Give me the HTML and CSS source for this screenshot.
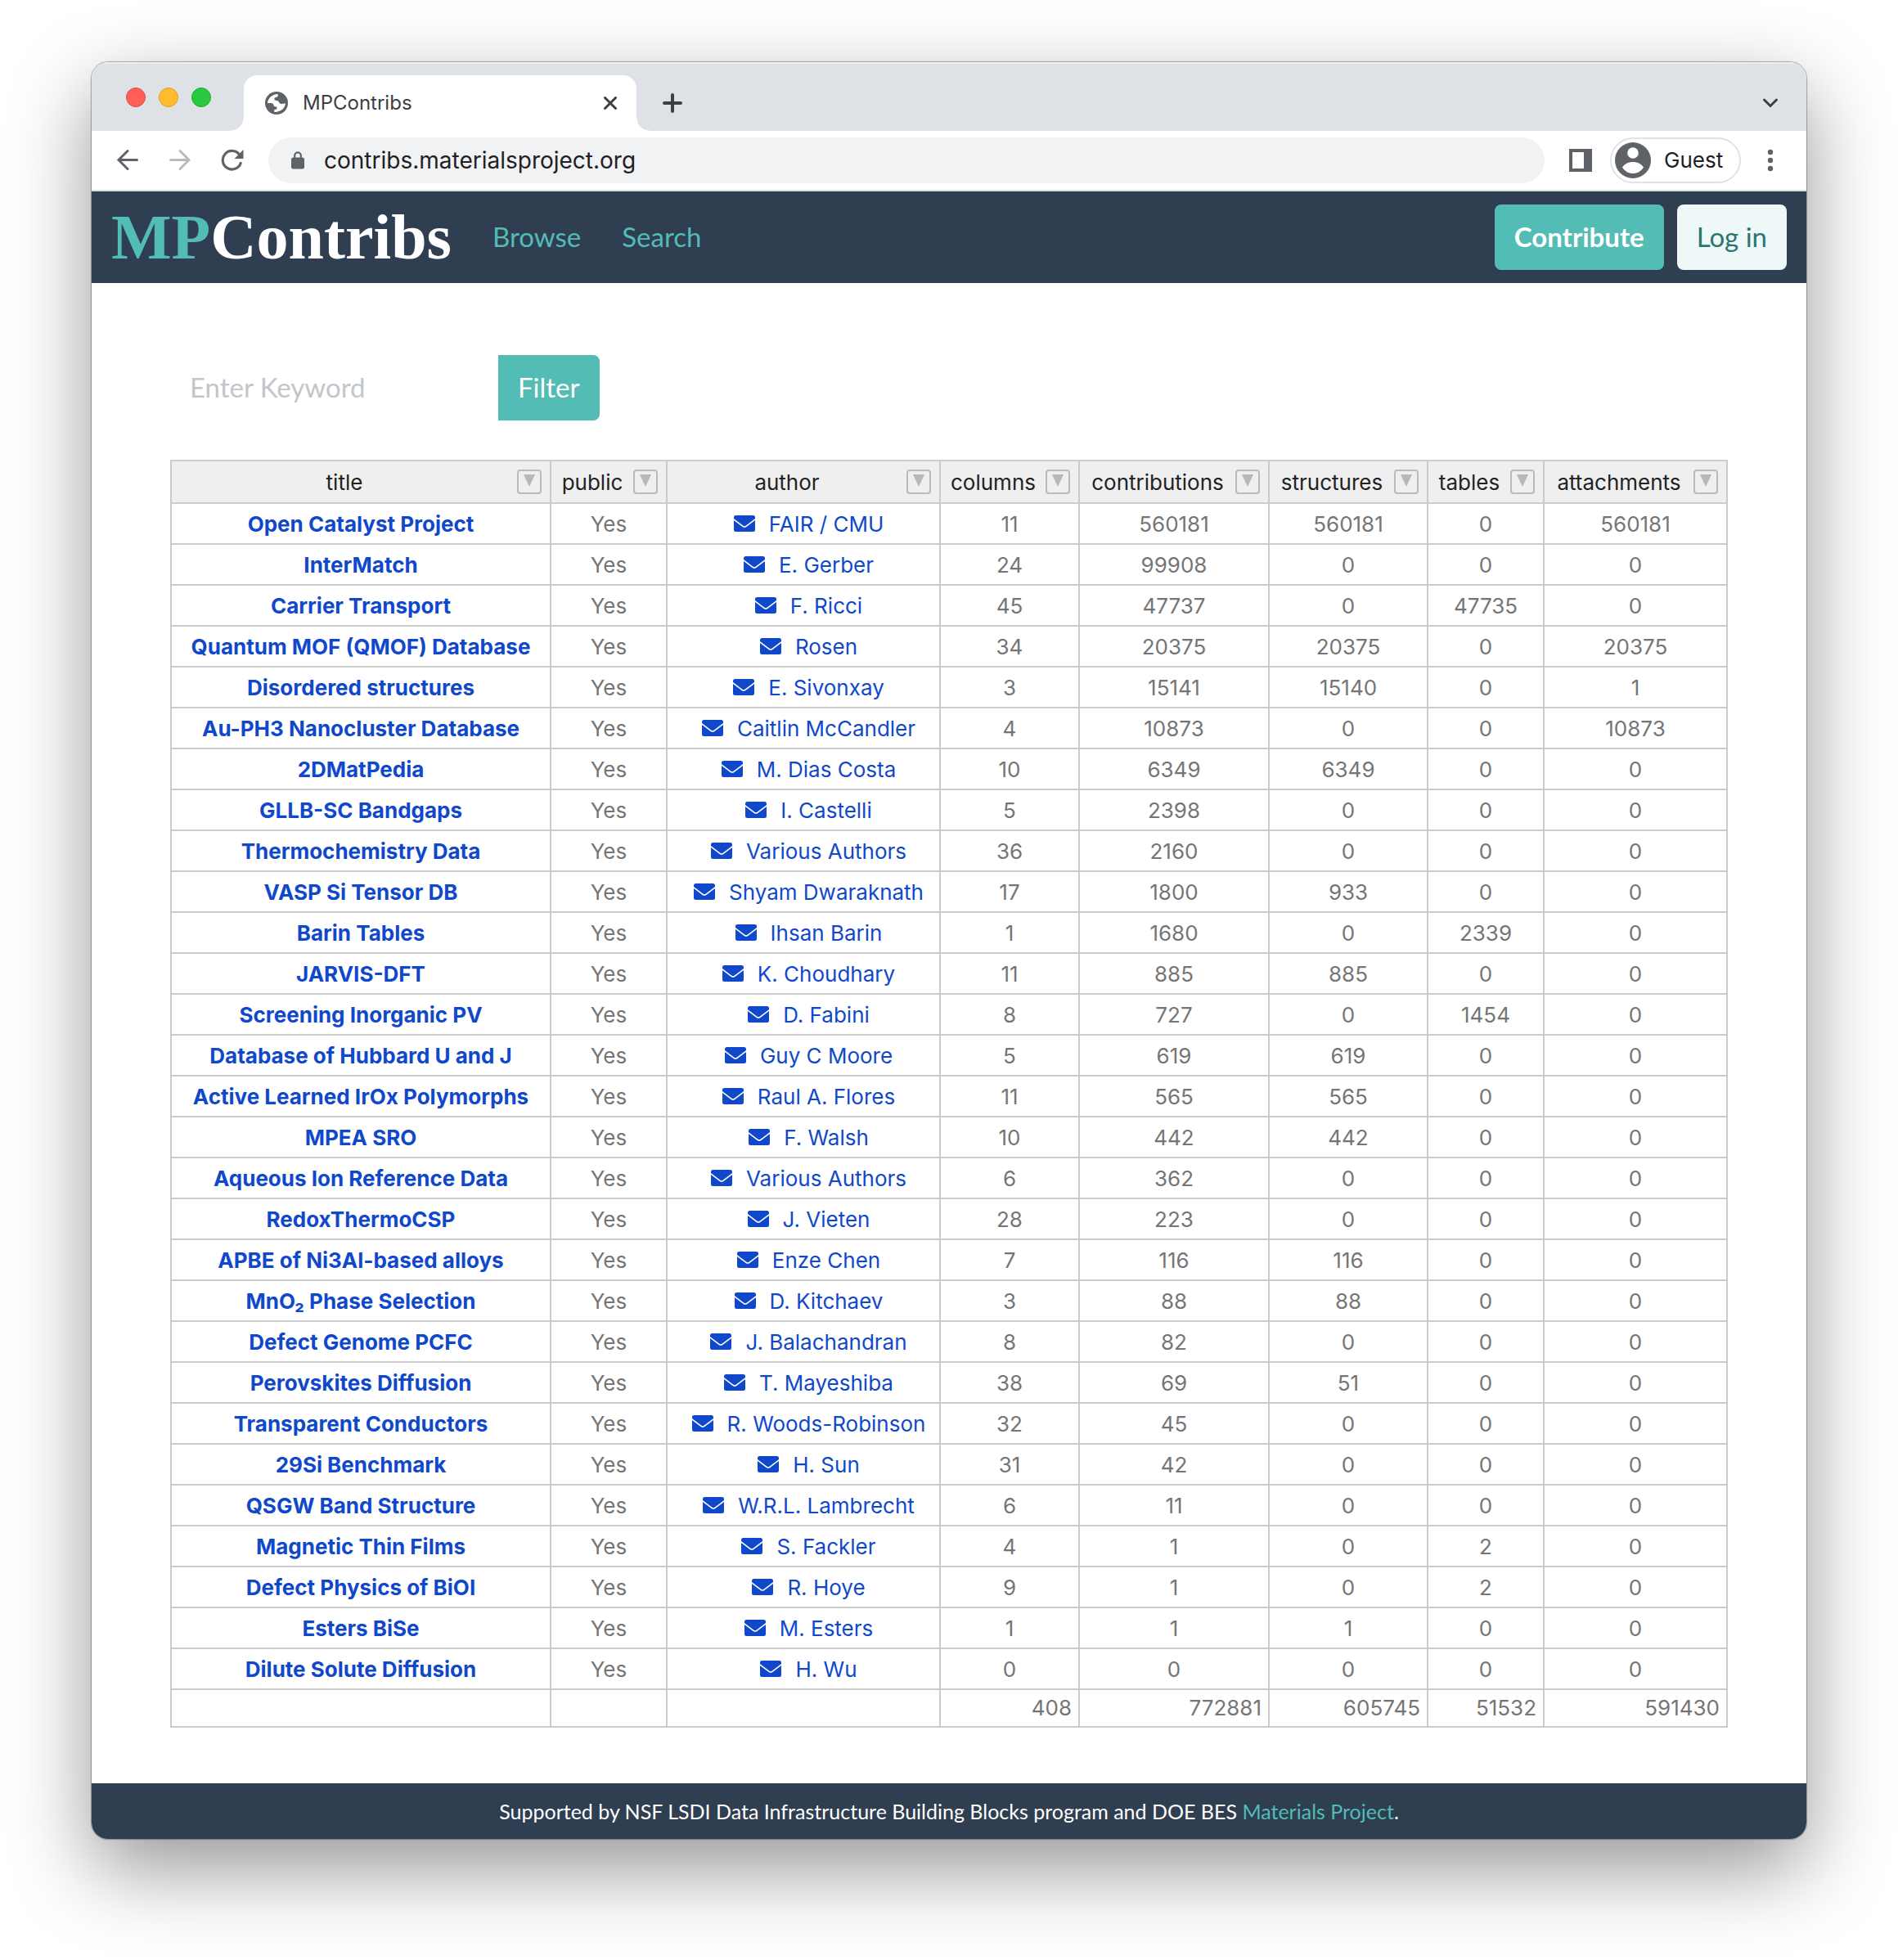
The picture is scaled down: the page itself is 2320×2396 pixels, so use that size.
FILE: index.html
```html
<!DOCTYPE html>
<html lang="en">
<head>
<meta charset="utf-8">
<meta name="viewport" content="width=device-width, initial-scale=1">
<title>MPContribs</title>
<link rel="stylesheet" href="styles.css">
</head>
<body>
<svg class="sprite" aria-hidden="true">
  <symbol id="mail" viewBox="0 0 26 20"><path d="M2.5 0h21A2.5 2.5 0 0 1 26 2.5v1.6L14.8 12.6q-1.8 1.3-3.6 0L0 4.1V2.5A2.5 2.5 0 0 1 2.5 0z"/><path d="M0 6l10.6 8q2.4 1.7 4.8 0L26 6v11.5a2.5 2.5 0 0 1-2.5 2.5h-21A2.5 2.5 0 0 1 0 17.5z"/></symbol>
  <symbol id="tri" viewBox="0 0 14 15"><path d="M0 0h14L7 15z"/></symbol>
</svg>
<div class="window">
  <div class="tabstrip">
    <div class="lights"><span class="light red"></span><span class="light yellow"></span><span class="light green"></span></div>
    <div class="tab">
      <svg class="globe" viewBox="0 0 28 28" aria-hidden="true"><circle cx="14" cy="14" r="14" fill="#5f6368"/><path fill="#fff" d="M3 13.9C3.500 8.600 8 3.400 15.700 3.100L15.900 4.600Q15.700 6.900 13.300 7Q11.300 7.200 11.300 8.900Q11.400 10.900 14 10.900Q16.800 11 17 13Q17.400 15 19.800 15Q23 15 24.900 14.200C24.600 20 19.800 25 11.300 24.900L11.300 22Q14.600 22.200 14.700 20.200Q14.800 18.300 12.300 18.200Q10.400 18.200 10.300 16.200Q10.200 14 7.800 13.900Z"/></svg>
      <span class="tab-title">MPContribs</span>
      <button class="bare" aria-label="Close tab"><svg width="16" height="16" viewBox="0 0 16 16"><path d="M1.500 1.500l13 13M14.500 1.500l-13 13" stroke="#3c4043" stroke-width="3" stroke-linecap="round"/></svg></button>
    </div>
    <button class="bare plus" aria-label="New tab"><svg width="24" height="24" viewBox="0 0 24 24"><path d="M12 2v20M2 12h20" stroke="#3c4043" stroke-width="4" stroke-linecap="round"/></svg></button>
    <button class="bare chevron" aria-label="Search tabs"><svg width="18" height="12" viewBox="0 0 18 12"><path d="M1.500 2L9 9.500 16.500 2" fill="none" stroke="#3c4043" stroke-width="3" stroke-linecap="round"/></svg></button>
  </div>
  <div class="toolbar">
    <div class="nav-icons">
      <button class="bare" aria-label="Back"><svg width="28" height="28" viewBox="0 0 28 28"><path d="M25.500 13.500H3M14 2.500l-11 11 11 11" fill="none" stroke="#5f6368" stroke-width="3" stroke-linecap="round"/></svg></button>
      <button class="bare" aria-label="Forward"><svg width="28" height="28" viewBox="0 0 28 28"><path d="M2.500 13.500H25M14 2.500l11 11-11 11" fill="none" stroke="#bababc" stroke-width="3" stroke-linecap="round"/></svg></button>
      <button class="bare" aria-label="Reload"><svg width="28" height="28" viewBox="0 0 28 28"><path d="M24.200 17.500A11.300 11.300 0 1 1 22.500 6.800" fill="none" stroke="#5f6368" stroke-width="3.200" stroke-linecap="round"/><path d="M27.500 1v11H16.500z" fill="#5f6368"/></svg></button>
    </div>
    <label class="omnibox">
      <svg width="16" height="22" viewBox="0 0 16 22" aria-hidden="true"><path d="M4.200 8V5.200a3.800 3.800 0 0 1 7.600 0V8" fill="none" stroke="#5f6368" stroke-width="2.200"/><rect y="7.500" width="16" height="14" rx="2.500" fill="#5f6368"/></svg>
      <input type="text" aria-label="Address" value="contribs.materialsproject.org">
    </label>
    <button class="bare panel" aria-label="Side panel"><svg width="28" height="28" viewBox="0 0 28 28"><path fill="#5f6368" fill-rule="evenodd" d="M0 0h28v28H0zM4 4v20h14V4z"/></svg></button>
    <button class="guest"><svg width="44" height="44" viewBox="0 0 44 44" aria-hidden="true"><circle cx="22" cy="22" r="22" fill="#5f6368"/><circle cx="22" cy="13" r="6.800" fill="#fff"/><path d="M9 30.500C12 26 17 24 22 24s10 2 13 6.500C32 35.500 27 38 22 38S12 35.500 9 30.500z" fill="#fff"/></svg>Guest</button>
    <button class="bare" aria-label="Menu"><svg width="8" height="28" viewBox="0 0 8 28"><g fill="#5f6368"><circle cx="4" cy="4" r="3.200"/><circle cx="4" cy="14" r="3.200"/><circle cx="4" cy="24" r="3.200"/></g></svg></button>
  </div>

  <header class="navbar">
    <a class="brand" href="#"><span>MP</span>Contribs</a>
    <nav class="links"><a href="#">Browse</a><a href="#">Search</a></nav>
    <div class="actions"><button class="btn primary">Contribute</button><button class="btn light-btn">Log in</button></div>
  </header>

  <main class="content">
    <form class="filter">
      <input type="text" aria-label="Keyword" placeholder="Enter Keyword">
      <button type="button" class="btn submit">Filter</button>
    </form>
    <table class="projects">
      <colgroup><col class="c-title"><col class="c-small"><col class="c-author"><col class="c-columns"><col class="c-contribs"><col class="c-structures"><col class="c-small"><col class="c-attach"></colgroup>
      <thead><tr>
        <th><div class="head"><span>title</span><button aria-label="Filter title"><svg><use href="#tri"/></svg></button></div></th>
        <th><div class="head"><span>public</span><button aria-label="Filter public"><svg><use href="#tri"/></svg></button></div></th>
        <th><div class="head"><span>author</span><button aria-label="Filter author"><svg><use href="#tri"/></svg></button></div></th>
        <th><div class="head"><span>columns</span><button aria-label="Filter columns"><svg><use href="#tri"/></svg></button></div></th>
        <th><div class="head"><span>contributions</span><button aria-label="Filter contributions"><svg><use href="#tri"/></svg></button></div></th>
        <th><div class="head"><span>structures</span><button aria-label="Filter structures"><svg><use href="#tri"/></svg></button></div></th>
        <th><div class="head"><span>tables</span><button aria-label="Filter tables"><svg><use href="#tri"/></svg></button></div></th>
        <th><div class="head"><span>attachments</span><button aria-label="Filter attachments"><svg><use href="#tri"/></svg></button></div></th>
      </tr></thead>
      <tbody>
        <tr><td><a href="#">Open Catalyst Project</a></td><td>Yes</td><td><a href="#"><svg><use href="#mail"/></svg>FAIR / CMU</a></td><td>11</td><td>560181</td><td>560181</td><td>0</td><td>560181</td></tr>
        <tr><td><a href="#">InterMatch</a></td><td>Yes</td><td><a href="#"><svg><use href="#mail"/></svg>E. Gerber</a></td><td>24</td><td>99908</td><td>0</td><td>0</td><td>0</td></tr>
        <tr><td><a href="#">Carrier Transport</a></td><td>Yes</td><td><a href="#"><svg><use href="#mail"/></svg>F. Ricci</a></td><td>45</td><td>47737</td><td>0</td><td>47735</td><td>0</td></tr>
        <tr><td><a href="#">Quantum MOF (QMOF) Database</a></td><td>Yes</td><td><a href="#"><svg><use href="#mail"/></svg>Rosen</a></td><td>34</td><td>20375</td><td>20375</td><td>0</td><td>20375</td></tr>
        <tr><td><a href="#">Disordered structures</a></td><td>Yes</td><td><a href="#"><svg><use href="#mail"/></svg>E. Sivonxay</a></td><td>3</td><td>15141</td><td>15140</td><td>0</td><td>1</td></tr>
        <tr><td><a href="#">Au-PH3 Nanocluster Database</a></td><td>Yes</td><td><a href="#"><svg><use href="#mail"/></svg>Caitlin McCandler</a></td><td>4</td><td>10873</td><td>0</td><td>0</td><td>10873</td></tr>
        <tr><td><a href="#">2DMatPedia</a></td><td>Yes</td><td><a href="#"><svg><use href="#mail"/></svg>M. Dias Costa</a></td><td>10</td><td>6349</td><td>6349</td><td>0</td><td>0</td></tr>
        <tr><td><a href="#">GLLB-SC Bandgaps</a></td><td>Yes</td><td><a href="#"><svg><use href="#mail"/></svg>I. Castelli</a></td><td>5</td><td>2398</td><td>0</td><td>0</td><td>0</td></tr>
        <tr><td><a href="#">Thermochemistry Data</a></td><td>Yes</td><td><a href="#"><svg><use href="#mail"/></svg>Various Authors</a></td><td>36</td><td>2160</td><td>0</td><td>0</td><td>0</td></tr>
        <tr><td><a href="#">VASP Si Tensor DB</a></td><td>Yes</td><td><a href="#"><svg><use href="#mail"/></svg>Shyam Dwaraknath</a></td><td>17</td><td>1800</td><td>933</td><td>0</td><td>0</td></tr>
        <tr><td><a href="#">Barin Tables</a></td><td>Yes</td><td><a href="#"><svg><use href="#mail"/></svg>Ihsan Barin</a></td><td>1</td><td>1680</td><td>0</td><td>2339</td><td>0</td></tr>
        <tr><td><a href="#">JARVIS-DFT</a></td><td>Yes</td><td><a href="#"><svg><use href="#mail"/></svg>K. Choudhary</a></td><td>11</td><td>885</td><td>885</td><td>0</td><td>0</td></tr>
        <tr><td><a href="#">Screening Inorganic PV</a></td><td>Yes</td><td><a href="#"><svg><use href="#mail"/></svg>D. Fabini</a></td><td>8</td><td>727</td><td>0</td><td>1454</td><td>0</td></tr>
        <tr><td><a href="#">Database of Hubbard U and J</a></td><td>Yes</td><td><a href="#"><svg><use href="#mail"/></svg>Guy C Moore</a></td><td>5</td><td>619</td><td>619</td><td>0</td><td>0</td></tr>
        <tr><td><a href="#">Active Learned IrOx Polymorphs</a></td><td>Yes</td><td><a href="#"><svg><use href="#mail"/></svg>Raul A. Flores</a></td><td>11</td><td>565</td><td>565</td><td>0</td><td>0</td></tr>
        <tr><td><a href="#">MPEA SRO</a></td><td>Yes</td><td><a href="#"><svg><use href="#mail"/></svg>F. Walsh</a></td><td>10</td><td>442</td><td>442</td><td>0</td><td>0</td></tr>
        <tr><td><a href="#">Aqueous Ion Reference Data</a></td><td>Yes</td><td><a href="#"><svg><use href="#mail"/></svg>Various Authors</a></td><td>6</td><td>362</td><td>0</td><td>0</td><td>0</td></tr>
        <tr><td><a href="#">RedoxThermoCSP</a></td><td>Yes</td><td><a href="#"><svg><use href="#mail"/></svg>J. Vieten</a></td><td>28</td><td>223</td><td>0</td><td>0</td><td>0</td></tr>
        <tr><td><a href="#">APBE of Ni3Al-based alloys</a></td><td>Yes</td><td><a href="#"><svg><use href="#mail"/></svg>Enze Chen</a></td><td>7</td><td>116</td><td>116</td><td>0</td><td>0</td></tr>
        <tr><td><a href="#">MnO₂ Phase Selection</a></td><td>Yes</td><td><a href="#"><svg><use href="#mail"/></svg>D. Kitchaev</a></td><td>3</td><td>88</td><td>88</td><td>0</td><td>0</td></tr>
        <tr><td><a href="#">Defect Genome PCFC</a></td><td>Yes</td><td><a href="#"><svg><use href="#mail"/></svg>J. Balachandran</a></td><td>8</td><td>82</td><td>0</td><td>0</td><td>0</td></tr>
        <tr><td><a href="#">Perovskites Diffusion</a></td><td>Yes</td><td><a href="#"><svg><use href="#mail"/></svg>T. Mayeshiba</a></td><td>38</td><td>69</td><td>51</td><td>0</td><td>0</td></tr>
        <tr><td><a href="#">Transparent Conductors</a></td><td>Yes</td><td><a href="#"><svg><use href="#mail"/></svg>R. Woods-Robinson</a></td><td>32</td><td>45</td><td>0</td><td>0</td><td>0</td></tr>
        <tr><td><a href="#">29Si Benchmark</a></td><td>Yes</td><td><a href="#"><svg><use href="#mail"/></svg>H. Sun</a></td><td>31</td><td>42</td><td>0</td><td>0</td><td>0</td></tr>
        <tr><td><a href="#">QSGW Band Structure</a></td><td>Yes</td><td><a href="#"><svg><use href="#mail"/></svg>W.R.L. Lambrecht</a></td><td>6</td><td>11</td><td>0</td><td>0</td><td>0</td></tr>
        <tr><td><a href="#">Magnetic Thin Films</a></td><td>Yes</td><td><a href="#"><svg><use href="#mail"/></svg>S. Fackler</a></td><td>4</td><td>1</td><td>0</td><td>2</td><td>0</td></tr>
        <tr><td><a href="#">Defect Physics of BiOI</a></td><td>Yes</td><td><a href="#"><svg><use href="#mail"/></svg>R. Hoye</a></td><td>9</td><td>1</td><td>0</td><td>2</td><td>0</td></tr>
        <tr><td><a href="#">Esters BiSe</a></td><td>Yes</td><td><a href="#"><svg><use href="#mail"/></svg>M. Esters</a></td><td>1</td><td>1</td><td>1</td><td>0</td><td>0</td></tr>
        <tr><td><a href="#">Dilute Solute Diffusion</a></td><td>Yes</td><td><a href="#"><svg><use href="#mail"/></svg>H. Wu</a></td><td>0</td><td>0</td><td>0</td><td>0</td><td>0</td></tr>
      </tbody>
      <tfoot><tr><td></td><td></td><td></td><td>408</td><td>772881</td><td>605745</td><td>51532</td><td>591430</td></tr></tfoot>
    </table>
  </main>

  <footer class="footer"><p>Supported by NSF LSDI Data Infrastructure Building Blocks program and DOE BES <a href="#">Materials Project</a>.</p></footer>
</div>
</body>
</html>
```
FILE: styles.css
```css
* { box-sizing: border-box; }

body {
  margin: 0;
  padding: 76px 112px 148px;
  background: #fff;
  font-family: Inter, "Liberation Sans", sans-serif;
  font-size: 26px;
  line-height: 32px;
  color: #1f2023;
}

a { text-decoration: none; }
button, input { font: inherit; border: 0; padding: 0; margin: 0; }
svg { display: block; flex: none; }
.sprite { position: absolute; width: 0; height: 0; }
.bare { background: none; display: block; flex: none; }

.window {
  border-radius: 20px;
  overflow: hidden;
  background: #fff;
  box-shadow: 0 0 1px 1px rgba(0, 0, 0, .3), 0 36px 100px rgba(0, 0, 0, .42);
}

/* Browser tab strip */
.tabstrip {
  display: flex;
  align-items: center;
  height: 84px;
  padding: 16px 35px 0 42px;
  background: #dee1e6;
  box-shadow: inset 0 2px 1px rgba(255, 255, 255, .5);
}
.lights { display: flex; gap: 16px; width: 144px; padding-bottom: 14px; }
.light { width: 24px; height: 24px; border-radius: 50%; border: 1px solid; }
.red { background: #ff5f57; border-color: #e24a41; }
.yellow { background: #febc2e; border-color: #e0a028; }
.green { background: #28c840; border-color: #1dad2b; }
.tab {
  position: relative;
  display: flex;
  align-items: center;
  width: 480px;
  height: 68px;
  padding: 0 24px 0 26px;
  border-radius: 16px 16px 0 0;
  background: #fff;
}
.tab::before, .tab::after {
  content: "";
  position: absolute;
  bottom: 0;
  width: 16px;
  height: 16px;
}
.tab::before { right: 100%; background: radial-gradient(circle at 0 0, transparent 15px, #fff 16px); }
.tab::after { left: 100%; background: radial-gradient(circle at 100% 0, transparent 15px, #fff 16px); }
.globe { width: 28px; height: 28px; margin-right: 18px; }
.tab-title { flex: 1; font-size: 24px; color: #3c4043; }
.plus { margin-left: 32px; }
.chevron { margin-left: auto; }

/* Browser toolbar */
.toolbar {
  display: flex;
  align-items: center;
  height: 74px;
  padding: 0 40px 0 30px;
  border-bottom: 2px solid #dadcdd;
}
.nav-icons { display: flex; gap: 36px; margin-right: 30px; }
.omnibox {
  display: flex;
  align-items: center;
  flex: 1;
  gap: 24px;
  height: 56px;
  padding: 0 28px;
  border-radius: 28px;
  background: #f1f2f4;
}
.omnibox input { flex: 1; min-width: 0; background: none; font-size: 28px; color: #1f2023; }
.panel { margin: 0 22px 0 30px; }
.guest {
  display: flex;
  align-items: center;
  gap: 16px;
  height: 56px;
  width: 160px;
  padding-left: 4px;
  margin-right: 32px;
  border: 2px solid #e1e2e4;
  border-radius: 28px;
  background: #fff;
  color: #1f2023;
}

/* Site navigation */
.navbar {
  display: flex;
  align-items: center;
  min-height: 112px;
  padding: 16px 24px;
  background: #2f3e50;
  font-family: Lato, "Open Sans", sans-serif;
  font-size: 33px;
  line-height: 40px;
}
.brand {
  font: bold 78px/80px "Liberation Serif", serif;
  color: #fff;
}
.brand span { color: #52bcb5; }
.links { display: flex; gap: 50px; margin-left: 50px; padding-bottom: 2px; }
.links a { color: #52bcb5; }
.actions { display: flex; gap: 16px; margin-left: auto; }
.btn { height: 80px; padding: 0 24px 2px; border-radius: 8px; white-space: nowrap; }
.primary { background: #52bcb5; color: #fff; font-weight: 700; }
.light-btn { background: #eff8f8; color: #2b776f; }

/* Page body */
.content { padding: 88px 96px 68px; }
.filter {
  display: flex;
  margin-bottom: 48px;
  font-family: Lato, "Open Sans", sans-serif;
  font-size: 33px;
}
.filter input { width: 401px; padding: 0 24px 2px; background: none; }
.filter input::placeholder { color: #c2c6cb; opacity: 1; }
.submit { background: #52bcb5; color: #fff; border-radius: 0 8px 8px 0; }

.projects {
  width: 100%;
  table-layout: fixed;
  border-collapse: collapse;
  text-align: center;
  color: #757575;
}
.c-title { width: 464px; }
.c-small { width: 142px; }
.c-author { width: 334px; }
.c-columns { width: 170px; }
.c-contribs { width: 232px; }
.c-structures { width: 194px; }
.c-attach { width: 224px; }
.projects th, .projects td { padding: 0; border: 2px solid #cbcbcb; }
.projects th { height: 52px; background: #efefef; color: #222; font-weight: 400; }
.projects td { height: 50px; padding-top: 2px; white-space: nowrap; }
.projects tfoot td { height: 46px; padding: 0 8px 0 0; text-align: right; }
.projects a { color: #1048cc; }
.projects td:first-child { font-weight: 700; }
.projects td:nth-child(3) a { display: inline-flex; align-items: center; vertical-align: top; }
.projects td:nth-child(3) svg { width: 26px; height: 20px; margin: 0 17px 2px 13px; fill: currentColor; }
.head { display: flex; align-items: center; }
.head span { flex: 1; padding-top: 2px; }
.head button {
  width: 30px;
  height: 30px;
  margin-right: 10px;
  padding: 4px 6px 0;
  border: 2px solid #bbb;
  border-radius: 4px;
  background: none;
}
.head svg { width: 14px; height: 15px; margin-bottom: 7px; fill: #b8b8b8; }

.footer {
  padding: 18px 24px;
  background: #2f3e50;
  color: #fff;
  font-family: Lato, "Open Sans", sans-serif;
  font-size: 25px;
  text-align: center;
}
.footer p { margin: 0; }
.footer a { color: #52bcb5; }
```
